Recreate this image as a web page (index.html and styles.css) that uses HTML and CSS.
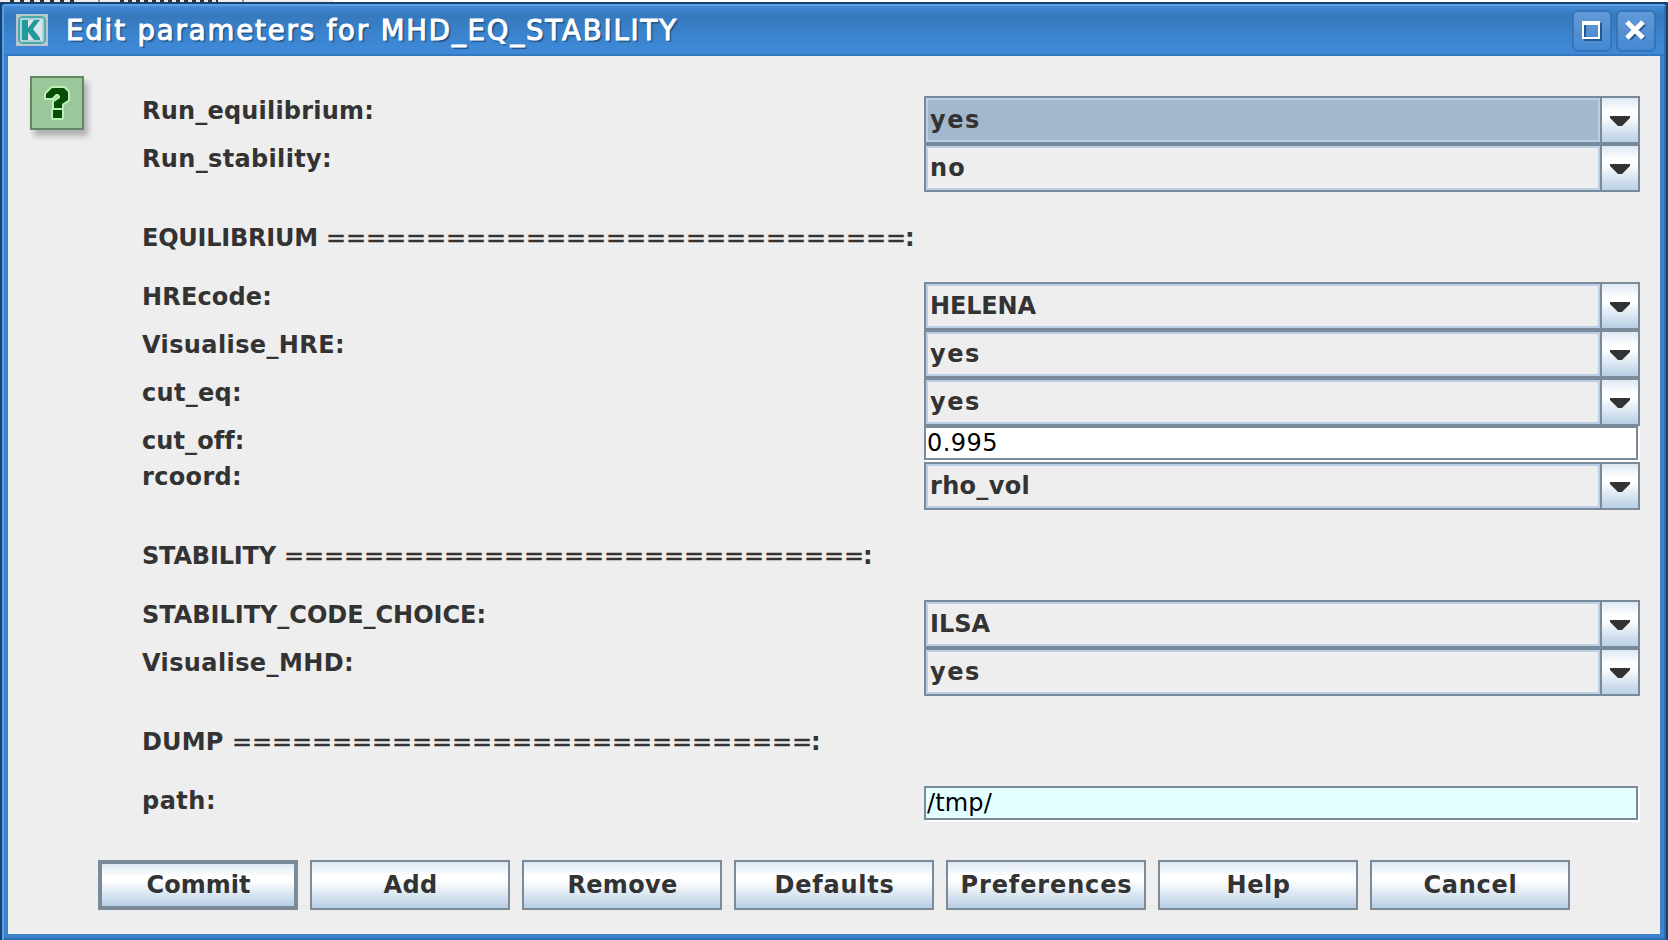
FILE: index.html
```html
<!DOCTYPE html>
<html lang="en"><head><meta charset="utf-8"><title>Edit parameters for MHD_EQ_STABILITY</title><link rel="stylesheet" href="styles.css"></head>
<body>
<div class="behind"><b class="t1"></b><i></i><b class="t2"></b><i></i><b class="rest"></b></div>
<main class="window">
<header class="titlebar">
<svg class="logo" width="32" height="32" viewBox="0 0 16 16"><path fill="#b7c5cd" d="M0 0h16v16H0z"/><rect x="1.5" y="1.5" width="13" height="13" rx="2" fill="#dce5ea" stroke="#4ba9ad"/><path d="M2.500 3v10M3 2.500h10M13.500 3v10M3 13.500h10" stroke="#9ccbd0" stroke-width=".7"/><path fill="#209a9b" d="M3 3h3v4l3-4h3L8.500 7.500 12 12v1H9L6 9v4H3z"/></svg>
<h1><span data-w="612">Edit parameters for MHD_EQ_STABILITY</span></h1>
<div class="wbtn"><svg width="40" height="42"><path d="M14 15h16v16H14z" fill="none" stroke="#245890" stroke-width="2"/><path d="M12 13h16v16H12z" fill="none" stroke="#fff" stroke-width="2"/><path d="M11 14h18" stroke="#fff" stroke-width="4"/></svg></div>
<div class="wbtn"><svg width="40" height="42"><path d="M14 15l15 15m0-15L14 30" stroke="#245890" stroke-width="5"/><path d="M12 13l16 16m0-16L12 29" stroke="#fff" stroke-width="5"/></svg></div>
</header>
<div class="body">
<div class="question"><svg width="50" height="50" viewBox="0 0 25 25"><path d="M7 10V8l3-3h6l2 2v4l-3 2v2h-4v-3l3-2V9l-1-1h-1l-2 2zM10.500 16H15v4h-4.500z" fill="#064b06" stroke="#b9f0b5" stroke-width="2" stroke-linejoin="round" paint-order="stroke"/></svg></div>
<form class="fields">
<div class="row"><label><span data-w="232">Run_equilibrium:</span></label><div class="combo sel"><p><span data-w="51">yes</span></p><i></i></div></div>
<div class="row"><label><span data-w="190">Run_stability:</span></label><div class="combo"><p><span data-w="36">no</span></p><i></i></div></div>
<div class="sep"><span data-w="184">EQUILIBRIUM </span><span class="eq" data-w="580">=============================</span><span>:</span></div>
<div class="row"><label><span data-w="130">HREcode:</span></label><div class="combo"><p><span data-w="106">HELENA</span></p><i></i></div></div>
<div class="row"><label><span data-w="203">Visualise_HRE:</span></label><div class="combo"><p><span data-w="51">yes</span></p><i></i></div></div>
<div class="row"><label><span data-w="100">cut_eq:</span></label><div class="combo"><p><span data-w="51">yes</span></p><i></i></div></div>
<div class="row short"><label><span data-w="101">cut_off:</span></label><div class="input"><span data-w="71">0.995</span></div></div>
<div class="row"><label><span data-w="100">rcoord:</span></label><div class="combo"><p><span data-w="100">rho_vol</span></p><i></i></div></div>
<div class="sep"><span data-w="142">STABILITY </span><span class="eq" data-w="580">=============================</span><span>:</span></div>
<div class="row"><label><span data-w="344">STABILITY_CODE_CHOICE:</span></label><div class="combo"><p><span data-w="60">ILSA</span></p><i></i></div></div>
<div class="row"><label><span data-w="212">Visualise_MHD:</span></label><div class="combo"><p><span data-w="51">yes</span></p><i></i></div></div>
<div class="sep"><span data-w="90">DUMP </span><span class="eq" data-w="580">=============================</span><span>:</span></div>
<div class="row short"><label><span data-w="74">path:</span></label><div class="input cyan"><span data-w="65">/tmp/</span></div></div>
</form>
<div class="buttons"><button class="def"><span data-w="104">Commit</span></button><button><span data-w="54">Add</span></button><button><span data-w="110">Remove</span></button><button><span data-w="120">Defaults</span></button><button><span data-w="172">Preferences</span></button><button><span data-w="64">Help</span></button><button><span data-w="94">Cancel</span></button></div>
</div>
</main>
<script src="fit.js"></script>
</body></html>
```
FILE: styles.css
```css
*{box-sizing:border-box}
body{margin:0;width:1668px;height:940px;overflow:hidden;background:#17426f;font:bold 24px/28px "DejaVu Sans",sans-serif;color:#333;position:relative}
span{white-space:pre;display:inline-block}
.behind{position:absolute;left:0;top:0;width:1668px;height:2px;background:#eee;display:flex;padding-left:10px}
.behind b{height:2px}
.t1{width:64px;margin-right:24px;background:repeating-linear-gradient(90deg,#333 0 4px,#eee 4px 10px)}
.t2{width:98px;margin:0 24px 0 20px;background:repeating-linear-gradient(90deg,#333 0 4px,#eee 4px 8px)}
.behind i{width:2px;height:2px;background:#8c9aac}
.rest{flex:1;margin-left:90px;background:#fff}
.window{position:absolute;left:2px;top:2px;width:1664px;height:938px;border-top:2px solid #17426f;background:#3b83cf;border-radius:4px 4px 0 0;box-shadow:inset 2px 2px #579ee6,inset -2px -2px #2e6cb0;padding:0 6px}
.titlebar{height:52px;display:flex;align-items:flex-start;padding:10px 8px 0 10px;margin:0 -4px;background:linear-gradient(#5ba1e8 0 2px,#4289d4 2px 4px,#387fc7 8px,#3679bd 12px,#3a82cc 28px,#3f8ad8 50px,#3378bd 50px)}
.logo{margin:0 18px 0 2px}
h1{margin:2px auto 0 0;font-size:27.5px;font-weight:400;line-height:28px;color:#fff;-webkit-text-stroke:1px #fff;text-shadow:2px 2px 1px #245488}
.wbtn{width:40px;height:42px;margin:-4px 0 0 4px;border:2px solid #3674b7;border-radius:6px;background:linear-gradient(#609adb,#5590d0 50%,#4389d4)}
.wbtn svg{display:block;margin:-3px}
.body{background:#eee;height:878px;position:relative;display:flex;flex-direction:column}
.question{position:absolute;left:22px;top:20px;width:54px;height:54px;border:2px solid #638764;background:#9bc89a;box-shadow:4px 6px 6px #0004}
.question svg{display:block}
.fields{padding:40px 0 0 134px;margin:0;width:1632px}
.row{height:48px;display:flex}
.row.short{height:36px}
.row label{width:782px;line-height:28px;padding-top:1px}
.combo{width:716px;height:48px;border:2px solid #7a8a99;display:flex}
.combo p{margin:0;flex:1;border:2px solid #b8cfe5;padding:6px 0 0 2px;line-height:28px}
.sel p{background:#a3b8cc}
.combo i{width:38px;border-left:2px solid #7a8a99;background:linear-gradient(#dde8f3,#fff 30%,#fff 40%,#b8cfe5);display:flex;justify-content:center;padding-top:18px}
.combo i:before{content:"";width:20px;height:10px;background:#333;clip-path:polygon(0 0,100% 0,100% 20%,60% 100%,40% 100%,0 20%)}
.input{width:714px;height:34px;border:2px solid #7a8a99;background:#fff;color:#000;font-weight:400;line-height:31px;padding-left:1px;box-shadow:2px 2px #fff}
.cyan{background:#e3ffff}
.sep{height:90px;padding-top:32px;line-height:28px}
.eq{font-weight:400;-webkit-text-stroke:.3px #333}
.eq+span{margin-left:-1px}
.buttons{display:flex;gap:12px;padding:38px 0 0 90px}
button{width:200px;height:50px;border:2px solid #7a8a99;background:linear-gradient(#dde8f3,#fff 30%,#fff 40%,#b8cfe5);font:inherit;color:#333;padding:0 0 0 1px;line-height:28px}
.def{border-width:4px}
```
FILE: fit.js
```js
document.querySelectorAll('[data-w]').forEach(s => {
  const w = s.getBoundingClientRect().width;
  s.style.letterSpacing = (s.dataset.w - w) / s.textContent.length + 'px';
});
```
